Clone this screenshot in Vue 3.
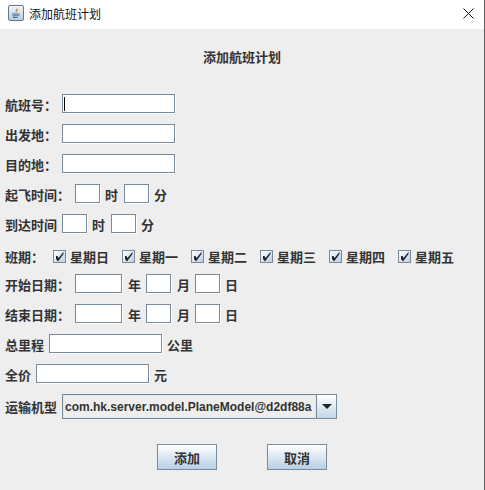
<template>
  <div class="window">
    <header class="titlebar">
      <svg class="java-icon" width="16" height="16" viewBox="0 0 16 16">
        <defs>
          <linearGradient id="iconBg" x1="0" y1="0" x2="0" y2="1">
            <stop offset="0" stop-color="#f4f7fa" />
            <stop offset="1" stop-color="#b9cbdd" />
          </linearGradient>
        </defs>
        <rect x="0.5" y="0.5" width="15" height="15" rx="1.5" fill="url(#iconBg)" stroke="#66798c" />
        <path d="M9 2.500c1 1.600-2.200 2.500-1.200 4.300.3.500.6.800.8 1.200-.9-1.400 2.600-2.500.4-5.500z" fill="#e2762a" />
        <path d="M4 9h6.500M4.500 10.800h5.500M5 12.500h4.500" stroke="#3f6f9e" stroke-width="1" fill="none" />
        <path d="M10.500 9c1.500-.3 1.500 1.500-.4 1.700" stroke="#3f6f9e" stroke-width="0.8" fill="none" />
      </svg>
      <span class="title-text">添加航班计划</span>
      <svg class="close-icon" width="11" height="11" viewBox="0 0 11 11">
        <path d="M0.500 0.500l10 10M10.500 0.500l-10 10" stroke="#111" stroke-width="1" fill="none" />
      </svg>
    </header>

    <main class="content">
      <h1 class="heading">添加航班计划</h1>

      <form class="form" @submit.prevent>
        <div class="row">
          <label class="lbl w57">航班号：</label>
          <div class="caret-wrap"><input class="field w113" /><i class="caret"></i></div>
        </div>
        <div class="row">
          <label class="lbl w57">出发地：</label>
          <input class="field w113" />
        </div>
        <div class="row">
          <label class="lbl w57">目的地：</label>
          <input class="field w113" />
        </div>

        <div class="row">
          <label class="lbl w70">起飞时间：</label>
          <input class="field w25" />
          <span class="unit u-time">时</span>
          <input class="field w25" />
          <span class="unit">分</span>
        </div>
        <div class="row">
          <label class="lbl w57">到达时间</label>
          <input class="field w25" />
          <span class="unit u-time">时</span>
          <input class="field w25" />
          <span class="unit">分</span>
        </div>

        <div class="row check-row">
          <label class="lbl w48">班期：</label>
          <div v-for="d in days" :key="d" class="check-item">
            <span class="check-box">
              <svg width="11" height="11" viewBox="0 0 11 11">
                <path d="M2 5v3l2 2.500L9.500 3V1L4.500 7 3.500 5z" fill="#222" />
              </svg>
            </span>
            <span class="check-label">{{ d }}</span>
          </div>
        </div>

        <div v-for="name in dateRows" :key="name" class="row">
          <label class="lbl w70">{{ name }}</label>
          <input class="field w47" />
          <span class="unit u-year">年</span>
          <input class="field w25" />
          <span class="unit u-year">月</span>
          <input class="field w25" />
          <span class="unit">日</span>
        </div>

        <div class="row">
          <label class="lbl w44">总里程</label>
          <input class="field w113" />
          <span class="unit">公里</span>
        </div>
        <div class="row">
          <label class="lbl w31">全价</label>
          <input class="field w113" />
          <span class="unit">元</span>
        </div>

        <div class="row combo-row">
          <label class="lbl w57">运输机型</label>
          <div class="combo">
            <span class="combo-value">com.hk.server.model.PlaneModel@d2df88a</span>
            <span class="combo-btn"><i class="arrow"></i></span>
          </div>
        </div>

        <div class="actions">
          <button class="btn" type="button">添加</button>
          <button class="btn" type="button">取消</button>
        </div>
      </form>
    </main>
  </div>
</template>

<script setup>
const days = ['星期日', '星期一', '星期二', '星期三', '星期四', '星期五']
const dateRows = ['开始日期：', '结束日期：']
</script>

<style scoped>
.window {
  width: 485px;
  height: 490px;
  box-sizing: border-box;
  border-right: 1px solid #5f5f5f;
  background: #eeeeee;
  font-family: "Noto Sans CJK SC", "Liberation Sans", sans-serif;
  color: #333;
  overflow: hidden;
  display: flex;
  flex-direction: column;
}

.titlebar {
  height: 29px;
  background: #fff;
  display: flex;
  align-items: center;
  padding: 0 10px 3px 8px;
  box-sizing: border-box;
  flex: none;
}
.java-icon { flex: none; }
.title-text {
  margin-left: 5px;
  font-size: 12px;
  line-height: 14px;
  margin-top: 1px;
  color: #111;
}
.close-icon { margin-left: auto; }

.content { flex: 1; }

.heading {
  margin: 0;
  padding: 19px 0 0 203px;
  height: 45px;
  box-sizing: border-box;
  font-size: 13px;
  line-height: 18px;
  font-weight: 700;
  color: #333;
}

.form {
  padding: 20px 0 0 5px;
  display: flex;
  flex-direction: column;
  gap: 11px;
}

.row {
  height: 19px;
  display: flex;
  align-items: center;
  font-size: 13px;
  font-weight: 700;
  line-height: 19px;
  white-space: nowrap;
}

.lbl { flex: none; padding-top: 2px; }
.w31 { width: 31px; }
.w44 { width: 44px; }
.w48 { width: 48px; }
.w57 { width: 57px; }
.w70 { width: 70px; }

.field {
  display: block;
  flex: none;
  height: 19px;
  box-sizing: border-box;
  padding: 0;
  border: 1px solid #7a8a99;
  background: #fff;
  box-shadow: 1px 1px 0 #fff;
  outline: none;
}
.w25 { width: 25px; }
.w47 { width: 47px; }
.w113 { width: 113px; }

.caret-wrap { position: relative; }
.caret {
  position: absolute;
  left: 2px;
  top: 3px;
  width: 1px;
  height: 14px;
  background: #000;
}

.unit { margin-left: 5px; padding-top: 2px; }
.u-time { width: 19px; flex: none; }
.u-year { margin-left: 6px; width: 18px; flex: none; }

.check-row {
  padding-top: 6px;
  box-sizing: border-box;
}
.check-row .lbl,
.combo-row .lbl { padding-top: 0; }
.check-item {
  width: 69px;
  flex: none;
  display: flex;
  align-items: center;
}
.check-box {
  width: 13px;
  height: 13px;
  box-sizing: border-box;
  border: 1px solid #7a8a99;
  background: linear-gradient(135deg, #fff 0%, #b8cfe5 100%);
  display: flex;
  flex: none;
}
.check-label { margin-left: 4px; }

.combo-row { height: 25px; }
.combo {
  width: 275px;
  height: 25px;
  box-sizing: border-box;
  border: 1px solid #7a8a99;
  background: #eeeeee;
  display: flex;
  flex: none;
}
.combo-value {
  flex: 1;
  padding-left: 2px;
  font-family: "Liberation Sans", Arial, sans-serif;
  font-size: 12px;
  font-weight: 700;
  line-height: 24px;
  color: #333;
  box-shadow: inset 0 0 0 1px #dce7f2;
}
.combo-btn {
  width: 20px;
  box-sizing: border-box;
  flex: none;
  border-left: 1px solid #7a8a99;
  background: linear-gradient(#fff 0%, #c3d5e7 100%);
  display: flex;
  align-items: center;
  justify-content: center;
}
.arrow {
  width: 0;
  height: 0;
  border-left: 5px solid transparent;
  border-right: 5px solid transparent;
  border-top: 5px solid #222;
}

.actions {
  display: flex;
  gap: 50px;
  margin-top: 14px;
  padding-left: 152px;
}
.btn {
  width: 60px;
  height: 26px;
  padding: 0;
  border: 1px solid #7a8a99;
  background: linear-gradient(#fff 0%, #b8cfe5 100%);
  font-family: inherit;
  font-size: 13px;
  font-weight: 700;
  color: #333;
}
</style>
